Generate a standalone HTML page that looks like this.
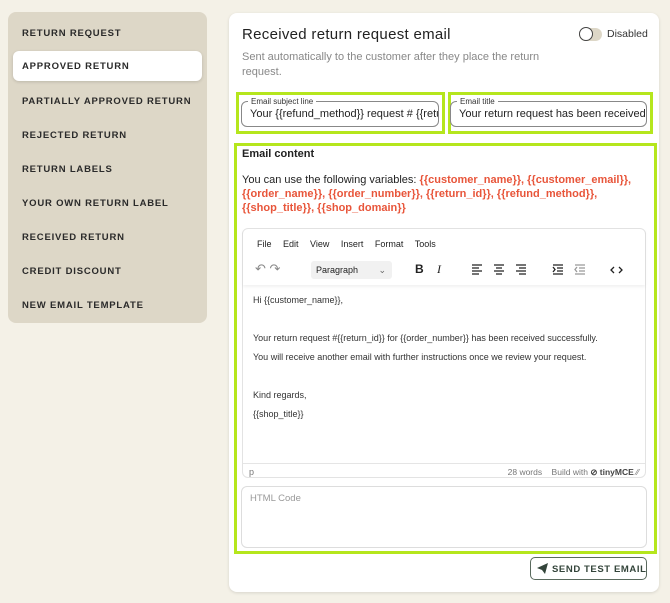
<!DOCTYPE html>
<html><head><style>
*{box-sizing:border-box;margin:0;padding:0}
body{width:670px;height:603px;background:#f4f1e7;font-family:"Liberation Sans",sans-serif;position:relative;overflow:hidden}
.abs{position:absolute}
.side{left:8px;top:12px;width:199px;height:311px;background:#ddd7c7;border-radius:8px}
.side div{position:absolute;left:14px;font-size:9.5px;font-weight:bold;letter-spacing:.8px;color:#2a2a2a}
.sel{left:5px!important;width:189px;height:30px;background:#fff;border-radius:6px;padding:10px 0 0 9px;box-shadow:0 1px 3px rgba(0,0,0,.15)}
.card{left:229px;top:13px;width:430px;height:579px;background:#fff;border-radius:8px;box-shadow:0 1px 3px rgba(0,0,0,.12)}
.g{border:3px solid #b5e61d}
.fld{border:1px solid #888;border-radius:6px;height:26px;font-size:11px;color:#222;padding:6px 8px;white-space:nowrap;overflow:hidden}
.lg{position:absolute;background:#fff;font-size:8px;color:#333;padding:0 3px;line-height:9px}
.var{color:#e8553a;font-weight:bold}
.ed p{position:absolute;left:10px;font-size:9px;color:#333;white-space:nowrap}
</style></head><body>
<div class="abs side">
<div style="top:16px">RETURN REQUEST</div>
<div class="sel" style="top:39px">APPROVED RETURN</div>
<div style="top:84px">PARTIALLY APPROVED RETURN</div>
<div style="top:118px">REJECTED RETURN</div>
<div style="top:152px">RETURN LABELS</div>
<div style="top:186px">YOUR OWN RETURN LABEL</div>
<div style="top:220px">RECEIVED RETURN</div>
<div style="top:254px">CREDIT DISCOUNT</div>
<div style="top:288px">NEW EMAIL TEMPLATE</div>
</div>
<div class="abs card"></div>
<div class="abs" style="left:242px;top:26px;font-size:15px;color:#222;letter-spacing:.3px">Received return request email</div>
<div class="abs" style="left:579px;top:28px;width:23px;height:13px;border-radius:7px;background:#ddd7c7"></div>
<div class="abs" style="left:579px;top:27px;width:14px;height:14px;border-radius:50%;background:#fff;border:1.5px solid #444"></div>
<div class="abs" style="left:607px;top:28px;font-size:10.5px;color:#333">Disabled</div>
<div class="abs" style="left:242px;top:50px;width:310px;font-size:11px;line-height:15px;color:#888">Sent automatically to the customer after they place the return request.</div>
<div class="abs g" style="left:236px;top:92px;width:209px;height:42px"></div>
<div class="abs fld" style="left:241px;top:101px;width:198px">Your {{refund_method}} request # {{return_id}}</div>
<div class="abs lg" style="left:248px;top:97px">Email subject line</div>
<div class="abs g" style="left:448px;top:92px;width:205px;height:42px"></div>
<div class="abs fld" style="left:450px;top:101px;width:197px">Your return request has been received</div>
<div class="abs lg" style="left:457px;top:97px">Email title</div>
<div class="abs g" style="left:234px;top:143px;width:423px;height:411px"></div>
<div class="abs" style="left:242px;top:148px;font-size:11px;font-weight:bold;color:#222">Email content</div>
<div class="abs" style="left:242px;top:173px;width:400px;font-size:11px;line-height:14px;color:#222">You can use the following variables: <span class="var">{{customer_name}}, {{customer_email}}, {{order_name}}, {{order_number}}, {{return_id}}, {{refund_method}}, {{shop_title}}, {{shop_domain}}</span></div>
<div class="abs ed" style="left:242px;top:228px;width:404px;height:250px;border:1px solid #e3e3e3;border-radius:6px">
<div class="abs" style="left:0;top:0;width:402px;height:56px;box-shadow:0 2px 3px rgba(0,0,0,.06)"></div>
<div class="abs" style="left:14px;top:10px;font-size:9px;color:#222;word-spacing:9px">File Edit View Insert Format Tools</div>
<div class="abs" style="left:12px;top:32px;font-size:13px;color:#888">↶ ↷</div>
<div class="abs" style="left:68px;top:32px;width:81px;height:18px;background:#f1f1f1;border-radius:3px;font-size:9px;color:#222;padding:4px 5px">Paragraph<span style="position:absolute;right:6px;color:#666">⌄</span></div>
<div class="abs" style="left:172px;top:33px;font-size:12px;font-weight:bold;color:#222">B</div>
<div class="abs" style="left:194px;top:33px;font-size:12px;font-style:italic;font-family:'Liberation Serif',serif;color:#222">I</div>
<svg class="abs" style="left:229px;top:35px" width="160" height="12" stroke="#222" stroke-width="1.3" fill="none">
<path d="M0 1h10M0 4h7M0 7h10M0 10h7"/><path d="M22 1h10M24 4h6M22 7h10M24 10h6"/><path d="M44 1h10M47 4h7M44 7h10M47 10h7"/>
<path d="M81 1h10M85 4h6M85 7h6M81 10h10M81 3l2 2.5-2 2.5"/><path stroke="#999" d="M103 1h10M107 4h6M107 7h6M103 10h10M105 3l-2 2.5 2 2.5"/>
<path d="M142 3l-3 3 3 3M147 3l3 3-3 3"/></svg>
<p style="top:66px">Hi {{customer_name}},</p>
<p style="top:104px">Your return request #{{return_id}} for {{order_number}} has been received successfully.</p>
<p style="top:123px">You will receive another email with further instructions once we review your request.</p>
<p style="top:161px">Kind regards,</p>
<p style="top:180px">{{shop_title}}</p>
<div class="abs" style="left:0;top:234px;width:402px;border-top:1px solid #e5e5e5"></div>
<div class="abs" style="left:6px;top:238px;font-size:9px;color:#777">p</div>
<div class="abs" style="right:6px;top:238px;font-size:8.5px;color:#777">28 words &nbsp;&nbsp; Build with <b style="color:#444">⊘ tinyMCE</b> ⁄⁄</div>
</div>
<div class="abs" style="left:241px;top:486px;width:406px;height:62px;border:1px solid #ddd;border-radius:6px;padding:6px 8px;font-size:9.5px;color:#999">HTML Code</div>
<div class="abs" style="left:530px;top:557px;width:117px;height:23px;border:1px solid #5a6a5e;border-radius:5px;font-size:9.5px;font-weight:bold;letter-spacing:.6px;color:#33443a;padding:6px 0 0 21px;white-space:nowrap">SEND TEST EMAIL</div>
<svg class="abs" style="left:537px;top:563px" width="12" height="11"><path d="M0 5L11 0 8 11 5 7z" fill="#33443a"/></svg>
</body></html>
